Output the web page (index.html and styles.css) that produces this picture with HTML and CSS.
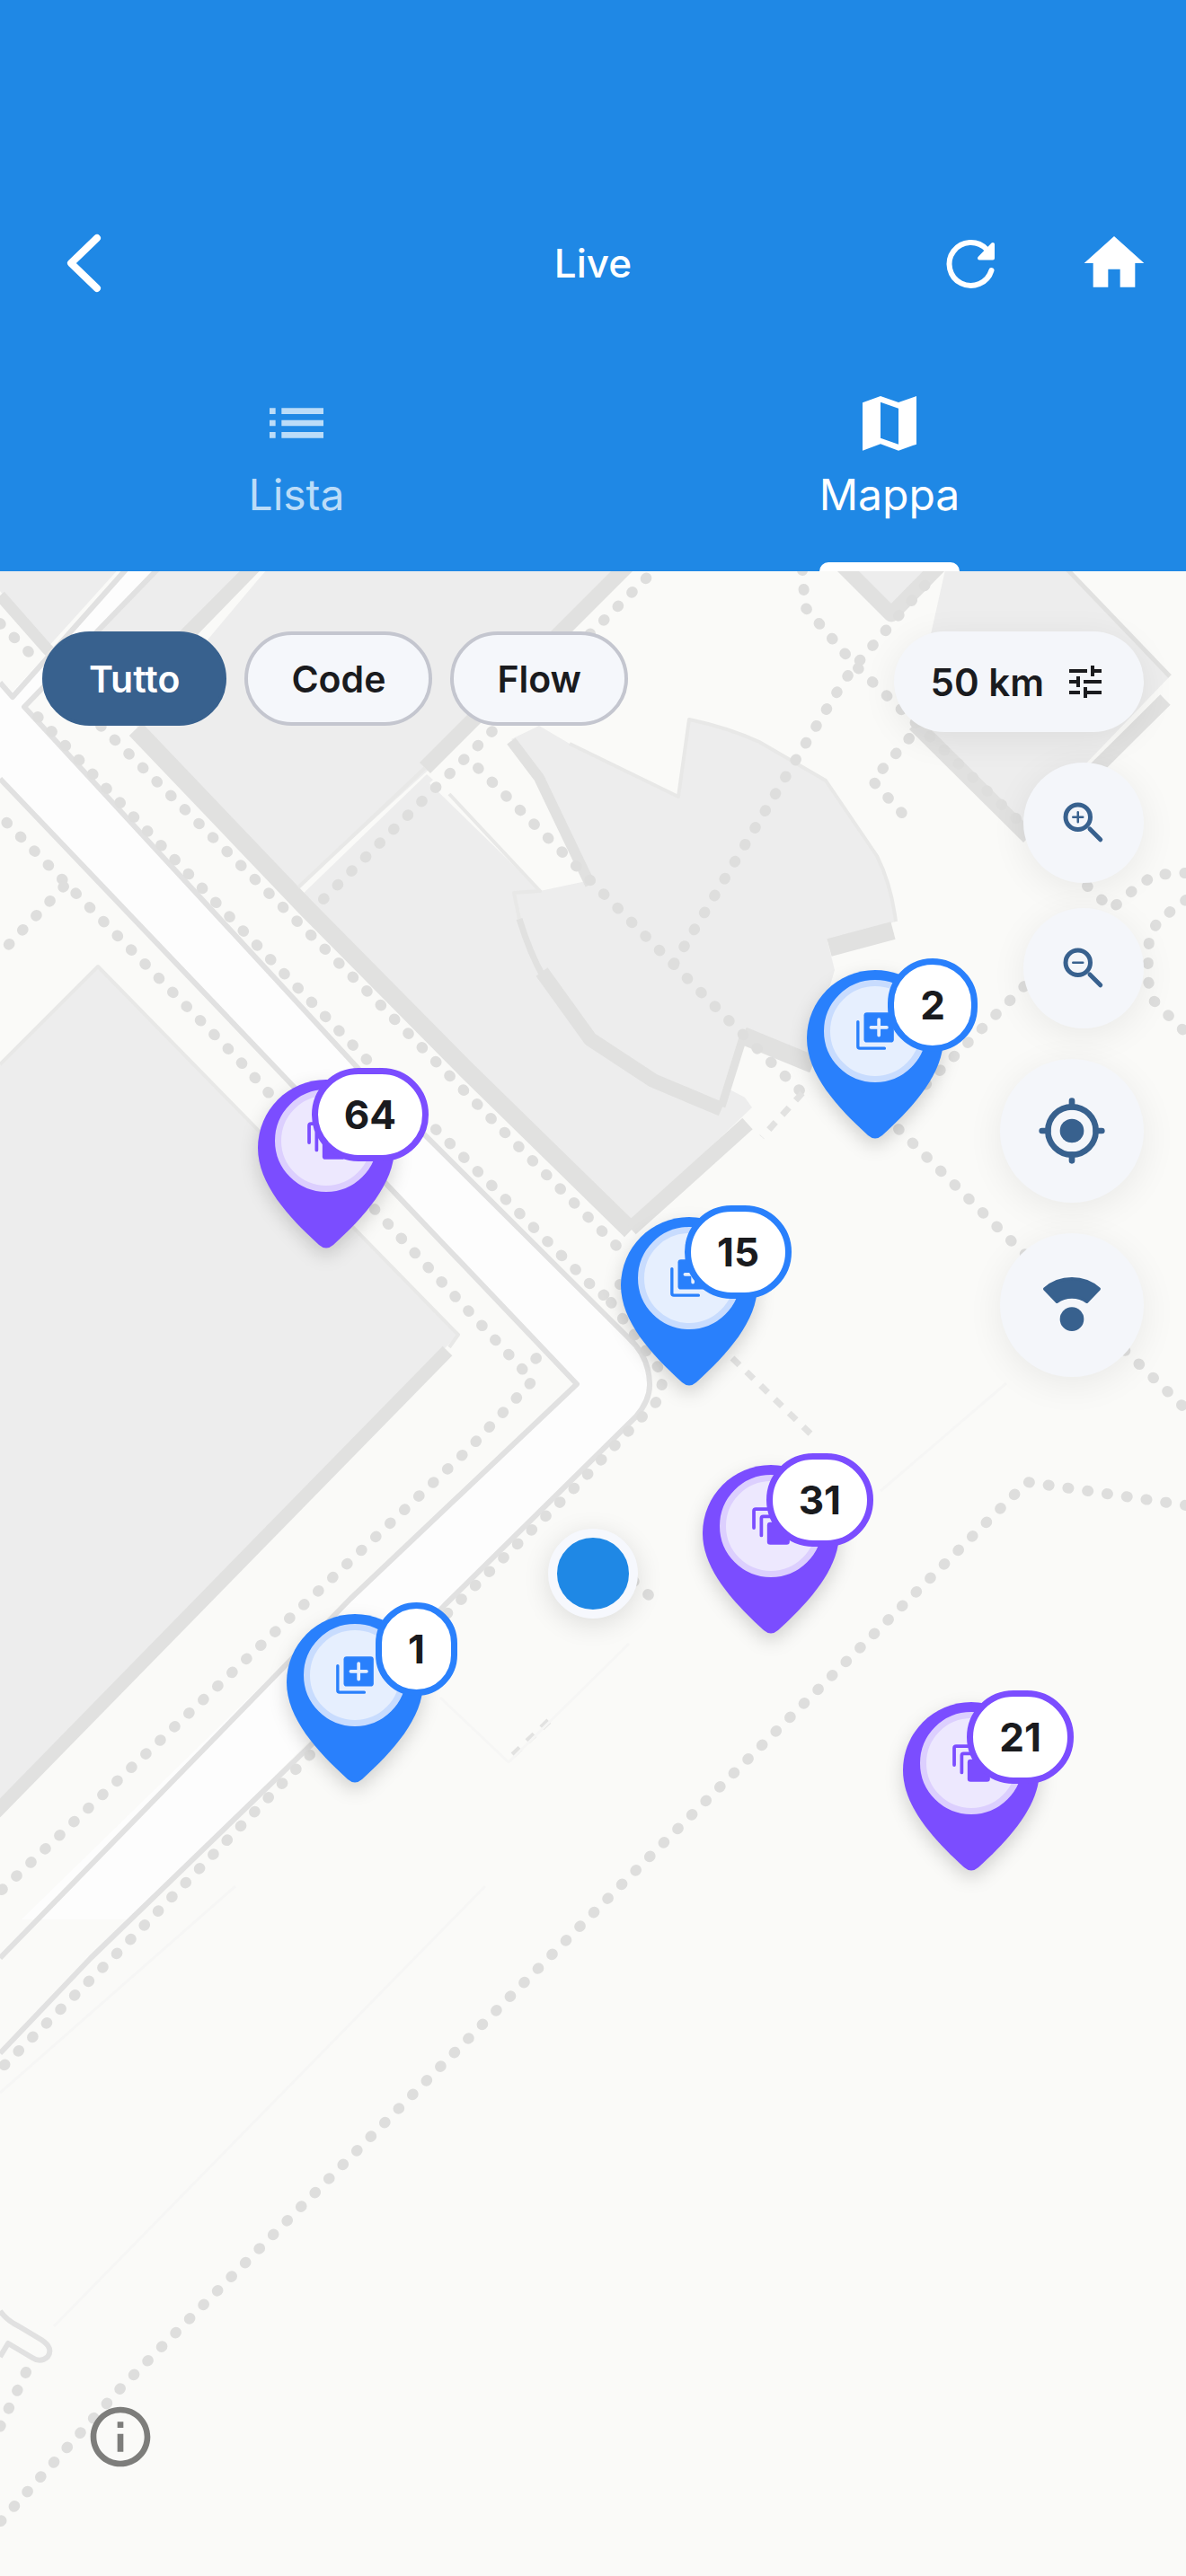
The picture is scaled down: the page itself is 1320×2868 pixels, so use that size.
FILE: index.html
```html
<!DOCTYPE html>
<html lang="it">
<head>
<meta charset="utf-8">
<meta name="viewport" content="width=device-width, initial-scale=1">
<title>Live</title>
<link rel="stylesheet" href="styles.css">
</head>
<body>
<svg class="defs" aria-hidden="true">
  <symbol id="icon-add" viewBox="0 0 24 24">
    <rect x="6" y="2" width="16" height="16" rx="1.6" fill="currentColor"/>
    <path d="M2.8 7v13.2q0 1 1 1H17" fill="none" stroke="currentColor" stroke-width="1.6" stroke-linecap="round"/>
    <path d="M14 5.8v8.400M9.800 10h8.400" stroke="#e6effe" stroke-width="1.8" stroke-linecap="round"/>
  </symbol>
  <symbol id="icon-stack" viewBox="0 0 24 24">
    <path d="M2.900 13V3.900q0-1 1-1H13M6.900 17V7.900q0-1 1-1H17" fill="none" stroke="currentColor" stroke-width="1.8" stroke-linecap="round"/>
    <rect x="10" y="10" width="12" height="12" rx="1.600" fill="currentColor"/>
  </symbol>
  <symbol id="pin-shape" viewBox="0 0 152 188">
    <path d="M76 0C118 0 152 34 152 76C152 116 118 153 84 184Q76 191 68 184C34 153 0 116 0 76C0 34 34 0 76 0Z" fill="currentColor"/>
  </symbol>
</svg>

<div class="screen">
  <header class="header">
    <div class="toolbar">
      <div class="toolbar-start">
        <button class="tool" type="button" aria-label="Indietro">
          <svg class="icon-80" viewBox="0 0 80 80" aria-hidden="true"><path d="M54 12 25 40l29 28" fill="none" stroke="#fff" stroke-width="8" stroke-linecap="round" stroke-linejoin="round"/></svg>
        </button>
      </div>
      <h1 class="title">Live</h1>
      <div class="toolbar-end">
        <button class="tool" type="button" aria-label="Aggiorna">
          <svg class="icon-80" viewBox="0 0 80 80" aria-hidden="true"><path d="M63.500 48A24 24 0 1 1 58 24.500L62 29" fill="none" stroke="#fff" stroke-width="6" stroke-linecap="round"/><path d="M65 19v15.500H50Z" fill="#fff" stroke="#fff" stroke-width="4" stroke-linejoin="round"/></svg>
        </button>
        <button class="tool" type="button" aria-label="Home">
          <svg class="icon-80" viewBox="0 0 24 24" aria-hidden="true"><path d="M10 20v-6h4v6h5v-8h3L12 3 2 12h3v8z" fill="#fff"/></svg>
        </button>
      </div>
    </div>
    <nav class="tabs">
      <a class="tab" href="#lista">
        <svg class="icon-80" viewBox="0 0 24 24" aria-hidden="true"><path d="M3 13h2v-2H3v2zm0 4h2v-2H3v2zm0-8h2V7H3v2zm4 4h14v-2H7v2zm0 4h14v-2H7v2zM7 7v2h14V7H7z" fill="currentColor"/></svg>
        <span class="tab-label">Lista</span>
      </a>
      <a class="tab tab-active" href="#mappa" aria-current="page">
        <svg class="icon-80" viewBox="0 0 24 24" aria-hidden="true"><path d="M15 5.100 9 3 3 5.200V21.200L9 19l6 2.200 6-2.100V3Zm0 14L9 17V5l6 2.100Z" fill="currentColor" fill-rule="evenodd"/></svg>
        <span class="tab-label">Mappa</span>
      </a>
    </nav>
  </header>

  <main class="map" id="mappa">
    <svg class="map-canvas" viewBox="0 636 1320 2232" preserveAspectRatio="xMidYMid slice" aria-hidden="true">
      <!-- buildings -->
      <g class="building">
        <path d="M0 630H135L52 722 0 658Z"/>
        <path d="M183 630H290L205 712 130 790 100 760 60 745Z"/>
        <path d="M300 630H700L476 858 330 990 151 808Z"/>
        <path d="M475 862 500 884 601 992 657 980 837 1233 702 1362 332 1000Z"/>
        <path d="M569 823 600 808 634 828 755 887 767 801Q810 810 845 826L919 869 976 953Q992 985 997 1026L921 1048 929 1080 900 1178 830 1148 805 1230 727 1195 657 1150 603 1080 573 996 657 980 601 870Z"/>
        <path d="M940 630H1035L990 682Z"/>
        <path d="M1053 630H1182L1302 753 1180 880 1140 925 1015 800Z"/>
        <path d="M109 1076 510 1486 0 2005V1185Z"/>
      </g>
      <g class="light">
        <path d="M478 872 552 800 569 823 601 873 657 980 601 992Z"/>
        <path d="M827 1160 900 1190 845 1230 810 1212Z"/>
      </g>
      <g class="shade">
        <path d="M0 663 52 722 130 800" stroke-width="13"/>
        <path d="M285 632 205 712" stroke-width="20"/>
        <path d="M698 630 473 855" stroke-width="17"/>
        <path d="M151 812 340 1010 520 1192 702 1370" stroke-width="20"/>
        <path d="M702 1368 832 1251" stroke-width="17"/>
        <path d="M569 825 600 866 657 985" stroke-width="12"/>
        <path d="M578 1023Q590 1062 605 1088" stroke-width="7"/>
        <path d="M603 1082 657 1157 727 1203 803 1235" stroke-width="16"/>
        <path d="M803 1232 828 1152" stroke-width="9"/>
        <path d="M827 1153 905 1185" stroke-width="20"/>
        <path d="M923 1055 994 1036" stroke-width="20"/>
        <path d="M938 630 992 684 1045 630" stroke-width="17"/>
        <path d="M1018 806 1145 932" stroke-width="17"/>
        <path d="M1160 915 1297 779" stroke-width="16"/>
        <path d="M1186 632 1302 753" stroke-width="5"/>
        <path d="M498 1504-5 2018" stroke-width="15"/>
      </g>
      <g class="outline">
        <path d="M473 855 332 988"/>
        <path d="M500 884 601 992 572 994 578 1023"/>
        <path d="M634 828 755 887 767 801Q810 810 845 826L919 869 976 953Q992 985 997 1026"/>
        <path d="M0 1185 109 1076 510 1486 500 1500"/>
      </g>
      <path class="strip" d="M296 632 222 708"/>
      <!-- roads -->
      <path class="road" d="M142 630 14 770 0 765V867L308 1190 643 1541 390 1780 24 2137H146L496 1786 700 1586Q722 1566 723 1546 724 1520 713 1505L399 1190 28 790 177 630Z"/>
      <g class="kerb">
        <path d="M142 632 14 776 0 760"/>
        <path d="M177 632 27 787 399 1190 700 1490Q722 1510 723 1540 724 1558 708 1577L496 1786 349 1940 101 2180 0 2286"/>
        <path d="M0 867 308 1190 642 1541 390 1780 0 2180"/>
        <path d="M0 2573Q8 2584 21 2590L46 2605Q60 2614 53 2624 45 2631 36 2625L9 2609 0 2624"/>
      </g>
      <!-- footpaths -->
      <g class="dots">
        <path d="M42 798 418 1190 670 1443 690 1430"/>
        <path d="M680 1450 738 1530 735 1556 643 1653 505 1789 133 2172 0 2304"/>
        <path d="M112 808 321 1016 413 1108 560 1259 692 1393"/>
        <path d="M-8 900 262 1176 423 1353 593 1537 523 1612 0 2106"/>
        <path d="M597 1512 584 1524"/>
        <path d="M71 987 0 1062"/>
        <path d="M0 694 41 735"/>
        <path d="M735 628 550 812 353 1008"/>
        <path d="M532 855 643 966 816 1141 893 1217"/>
        <path d="M1000 1257 1127 1383 1320 1569"/>
        <path d="M750 1073 891 837 938 760 952 741 1030 651"/>
        <path d="M893 634 896 676 952 741 1000 787 1237 1012 1266 987 1285 974 1320 972"/>
        <path d="M1012 822 971 869 1010 912"/>
        <path d="M1320 1002 1289 1025 1279 1044 1277 1089 1284 1114 1320 1150"/>
        <path d="M1140 1098 1020 1218"/>
        <path d="M1320 1676 1143 1650 690 2100 135 2658 0 2808"/>
        <path d="M29 2641 0 2702"/>
        <path d="M705 1760 733 1786"/>
      </g>
      <g class="dashes">
        <path d="M893 1217 848 1266"/>
        <path d="M815 1512 907 1601"/>
        <path d="M571 1954 612 1915"/>
      </g>
      <g class="faint">
        <path d="M262 2100 0 2330M540 2100 60 2590"/>
        <path d="M490 1890 566 1962 700 1830"/>
        <path d="M1120 1540 980 1660"/>
      </g>
    </svg>

    <button class="pin pin-purple" type="button" style="--x:-297px;--y:-362px">
      <svg class="pin-body" aria-hidden="true"><use href="#pin-shape"/></svg>
      <span class="pin-disc"><svg class="icon-50" aria-hidden="true"><use href="#icon-stack"/></svg></span>
      <span class="badge">64</span>
    </button>
    <button class="pin pin-blue" type="button" style="--x:314px;--y:-484px">
      <svg class="pin-body" aria-hidden="true"><use href="#pin-shape"/></svg>
      <span class="pin-disc"><svg class="icon-50" aria-hidden="true"><use href="#icon-add"/></svg></span>
      <span class="badge">2</span>
    </button>
    <button class="pin pin-blue" type="button" style="--x:107px;--y:-209px">
      <svg class="pin-body" aria-hidden="true"><use href="#pin-shape"/></svg>
      <span class="pin-disc"><svg class="icon-50" aria-hidden="true"><use href="#icon-add"/></svg></span>
      <span class="badge">15</span>
    </button>
    <button class="pin pin-purple" type="button" style="--x:198px;--y:67px">
      <svg class="pin-body" aria-hidden="true"><use href="#pin-shape"/></svg>
      <span class="pin-disc"><svg class="icon-50" aria-hidden="true"><use href="#icon-stack"/></svg></span>
      <span class="badge">31</span>
    </button>
    <button class="pin pin-blue" type="button" style="--x:-265px;--y:233px">
      <svg class="pin-body" aria-hidden="true"><use href="#pin-shape"/></svg>
      <span class="pin-disc"><svg class="icon-50" aria-hidden="true"><use href="#icon-add"/></svg></span>
      <span class="badge">1</span>
    </button>
    <button class="pin pin-purple" type="button" style="--x:421px;--y:331px">
      <svg class="pin-body" aria-hidden="true"><use href="#pin-shape"/></svg>
      <span class="pin-disc"><svg class="icon-50" aria-hidden="true"><use href="#icon-stack"/></svg></span>
      <span class="badge">21</span>
    </button>
    <span class="me" role="img" aria-label="La tua posizione"></span>

    <div class="overlay">
      <div class="chips">
        <button class="chip chip-active" type="button" aria-pressed="true">Tutto</button>
        <button class="chip" type="button" aria-pressed="false">Code</button>
        <button class="chip" type="button" aria-pressed="false">Flow</button>
      </div>
      <div class="controls">
        <button class="radius" type="button">
          50 km
          <svg class="icon-48" viewBox="0 0 24 24" aria-hidden="true"><path d="M3 17v2h6v-2H3zM3 5v2h10V5H3zm10 16v-2h8v-2h-8v-2h-2v6h2zM7 9v2H3v2h4v2h2V9H7zm14 4v-2H11v2h10zm-6-4h2V7h4V5h-4V3h-2v6z" fill="currentColor"/></svg>
        </button>
        <div class="zoom">
          <button class="round" type="button" aria-label="Ingrandisci">
            <svg class="icon-60" viewBox="0 0 24 24" fill="none" stroke="currentColor" stroke-width="2" stroke-linecap="round" aria-hidden="true"><circle cx="9.500" cy="9.500" r="5.500"/><path d="m14.800 14.800 4.700 4.700"/><path d="M7.300 9.500h4.400M9.500 7.300v4.400" stroke-width="1"/></svg>
          </button>
          <button class="round" type="button" aria-label="Riduci">
            <svg class="icon-60" viewBox="0 0 24 24" fill="none" stroke="currentColor" stroke-width="2" stroke-linecap="round" aria-hidden="true"><circle cx="9.500" cy="9.500" r="5.500"/><path d="m14.800 14.800 4.700 4.700"/><path d="M7.300 9.500h4.400" stroke-width="1"/></svg>
          </button>
        </div>
        <button class="round round-large" type="button" aria-label="Centra sulla posizione">
          <svg class="icon-80" viewBox="0 0 24 24" fill="none" stroke="currentColor" stroke-width="2" stroke-linecap="round" aria-hidden="true"><circle cx="12" cy="12" r="8"/><circle cx="12" cy="12" r="4" fill="currentColor" stroke="none"/><path d="M12 2v2M12 20v2M2 12h2M20 12h2"/></svg>
        </button>
        <button class="round round-large" type="button" aria-label="Segnale">
          <svg class="icon-80" viewBox="0 0 24 24" fill="currentColor" aria-hidden="true"><path d="M2.900 6.600Q6.700 3.200 12 3.200t9.100 3.400L17 10.900Q14.800 9.300 12 9.300T7 10.900Z" stroke="currentColor" stroke-linejoin="round"/><circle cx="12" cy="16.700" r="4"/></svg>
        </button>
      </div>
    </div>

    <button class="info" type="button" aria-label="Informazioni">
      <svg class="icon-80" viewBox="0 0 24 24" aria-hidden="true"><path d="M11 7h2v2h-2zm0 4h2v6h-2zm1-9C6.480 2 2 6.480 2 12s4.480 10 10 10 10-4.480 10-10S17.520 2 12 2zm0 18c-4.410 0-8-3.590-8-8s3.590-8 8-8 8 3.590 8 8-3.590 8-8 8z" fill="currentColor"/></svg>
    </button>
  </main>
</div>
</body>
</html>
```
FILE: styles.css
```css
* {
  box-sizing: border-box;
}

body {
  margin: 0;
  font-family: Inter, "Liberation Sans", sans-serif;
  background: #fafaf8;
}

button {
  margin: 0;
  padding: 0;
  border: 0;
  background: none;
  font: inherit;
  color: inherit;
  cursor: pointer;
}

svg {
  display: block;
}

.defs {
  position: absolute;
  width: 0;
  height: 0;
}

.icon-80 { width: 80px; height: 80px; }
.icon-60 { width: 60px; height: 60px; }
.icon-50 { width: 50px; height: 50px; }
.icon-48 { width: 48px; height: 48px; }

.screen {
  display: flex;
  flex-direction: column;
  min-height: 100vh;
}

/* Header */

.header {
  padding-top: 210px;
  background: #1f88e5;
  color: #fff;
}

.toolbar {
  display: grid;
  grid-template-columns: 1fr auto 1fr;
  align-items: center;
  height: 166px;
  padding: 0 20px;
}

.toolbar-start,
.toolbar-end {
  display: flex;
}

.toolbar-start {
  padding-left: 14px;
}

.toolbar-end {
  justify-content: flex-end;
  gap: 40px;
}

.tool {
  display: grid;
  place-items: center;
  width: 120px;
  height: 120px;
}

.title {
  margin: 0;
  font-size: 44px;
  font-weight: 500;
  line-height: 56px;
}

.tabs {
  display: grid;
  grid-template-columns: 1fr 1fr;
}

.tab {
  display: flex;
  flex-direction: column;
  align-items: center;
  gap: 12px;
  padding-top: 55px;
  color: #bbdcf8;
  text-decoration: none;
}

.tab-active {
  color: #fff;
}

.tab-label {
  padding-bottom: 47px;
  border-bottom: 10px solid transparent;
  font-size: 48px;
  line-height: 56px;
}

.tab-active .tab-label {
  position: relative;
}

.tab-active .tab-label::after {
  content: "";
  position: absolute;
  right: 0;
  bottom: -10px;
  left: 0;
  height: 10px;
  border-radius: 10px 10px 0 0;
  background: #fff;
}

/* Map */

.map {
  position: relative;
  flex: 1;
  display: flex;
  flex-direction: column;
  justify-content: space-between;
  overflow: hidden;
  background: #fafaf8;
}

.map-canvas {
  position: absolute;
  inset: 0;
  width: 100%;
  height: 100%;
}

.building { fill: #ededed; }
.light { fill: #fafaf8; }
.road { fill: #fdfdfd; }

.shade,
.outline,
.kerb,
.dots,
.dashes,
.faint,
.strip {
  fill: none;
  stroke: #e1e1e0;
  stroke-linejoin: round;
}

.outline { stroke: #e8e8e7; stroke-width: 4; }
.kerb { stroke: #e1e1e1; stroke-width: 6; }
.dots { stroke: #dededd; stroke-width: 12; stroke-linecap: round; stroke-dasharray: 1 21; }
.dashes { stroke: #e2e2e1; stroke-width: 7; stroke-dasharray: 11 11; }
.faint { stroke: #f6f6f5; stroke-width: 3; }
.strip { stroke: #fafaf8; stroke-width: 5; }

.pin {
  position: absolute;
  top: calc(50% + var(--y));
  left: calc(50% + var(--x));
  width: 152px;
  height: 188px;
  transform: translate(-50%, -100%);
}

.pin-blue { --tone: #2980fc; --disc: #e6effe; --ring: #c8dcfe; }
.pin-purple { --tone: #7b4dff; --disc: #ede8fe; --ring: #dccffe; }

.pin-body {
  width: 152px;
  height: 188px;
  color: var(--tone);
  filter: drop-shadow(0 8px 10px rgba(0, 0, 0, 0.16));
}

.pin-disc {
  position: absolute;
  top: 11px;
  left: 19px;
  display: grid;
  place-items: center;
  width: 114px;
  height: 114px;
  border: 7px solid var(--ring);
  border-radius: 50%;
  background: var(--disc);
  color: var(--tone);
}

.badge {
  position: absolute;
  top: -13px;
  right: -38px;
  padding: 0 29px;
  border: 7px solid var(--tone);
  border-radius: 52px;
  background: #fff;
  color: #1a1b1e;
  font-size: 44px;
  font-weight: 700;
  line-height: 90px;
}

.me {
  position: absolute;
  top: 50%;
  left: 50%;
  width: 100px;
  height: 100px;
  border: 10px solid #f6f8fd;
  border-radius: 50%;
  background: #1f88e5;
  box-shadow: 0 6px 30px rgba(0, 0, 0, 0.12);
  transform: translate(-50%, -50%);
}

/* Controls over the map */

.overlay {
  position: relative;
  display: flex;
  justify-content: space-between;
  align-items: flex-start;
  padding: 67px 47px 0;
  pointer-events: none;
}

.overlay button {
  pointer-events: auto;
}

.chips {
  display: flex;
  gap: 20px;
}

.chip {
  height: 105px;
  padding: 0 48px;
  border: 4px solid #c4c6cf;
  border-radius: 53px;
  background: #f5f7fb;
  color: #1a1b1e;
  font-size: 41px;
  font-weight: 600;
}

.chip-active {
  border-color: #38618e;
  background: #38618e;
  color: #fff;
}

.controls {
  display: flex;
  flex-direction: column;
  align-items: flex-end;
  gap: 34px;
}

.radius,
.round {
  background: #f4f6fa;
  box-shadow: 0 8px 40px rgba(0, 0, 0, 0.07);
}

.radius {
  display: flex;
  align-items: center;
  gap: 22px;
  height: 112px;
  padding: 0 41px;
  border-radius: 56px;
  color: #1a1b1e;
  font-size: 42px;
  font-weight: 600;
}

.zoom {
  display: flex;
  flex-direction: column;
  gap: 28px;
}

.round {
  display: grid;
  place-items: center;
  width: 134px;
  height: 134px;
  border-radius: 50%;
  color: #38618e;
}

.round-large {
  width: 160px;
  height: 160px;
}

.info {
  position: relative;
  align-self: flex-start;
  margin: 0 94px 115px;
  color: #7d7d7b;
}
```
